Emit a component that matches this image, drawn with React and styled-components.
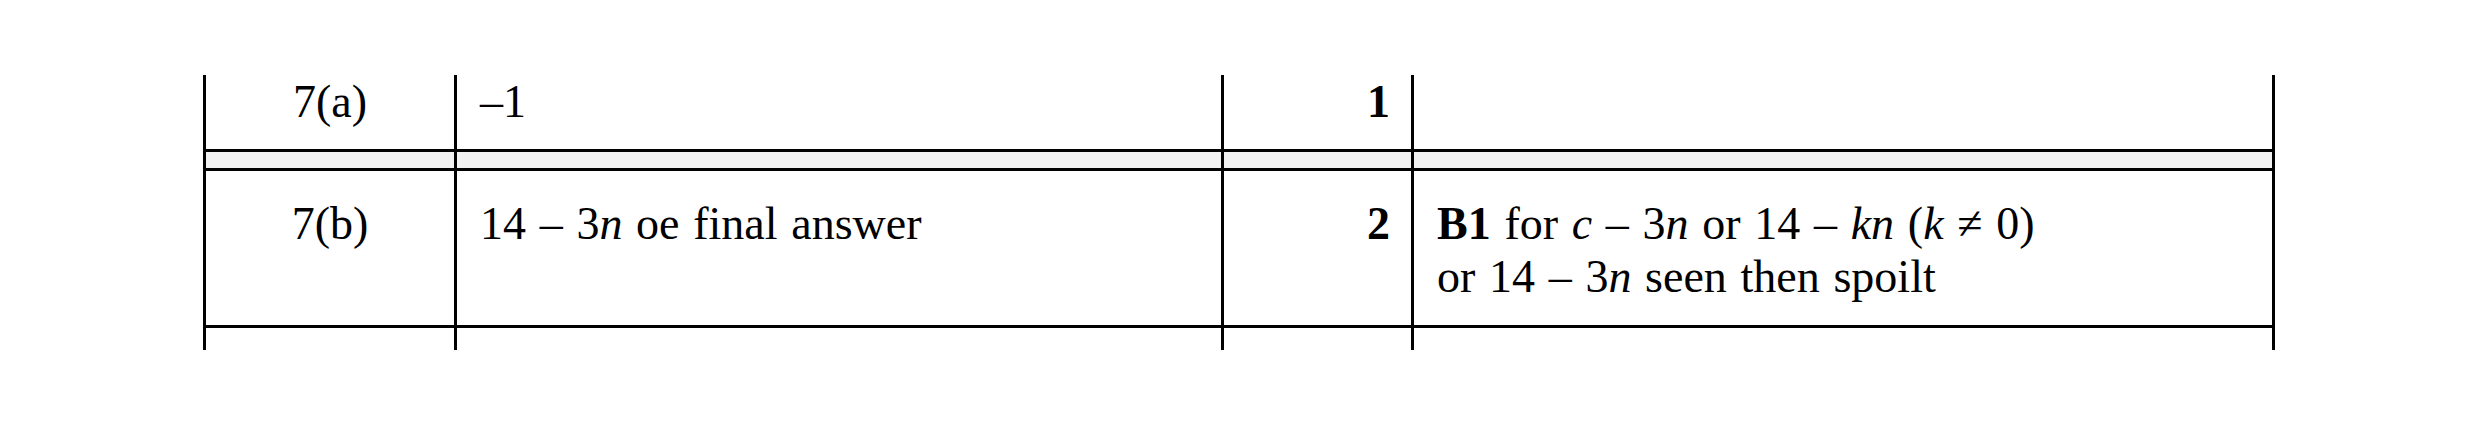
import React from "react";
import styled, { createGlobalStyle } from "styled-components";

const Global = createGlobalStyle`
  html, body { margin: 0; padding: 0; background: #fff; }
  body { font-family: "Liberation Serif", "Times New Roman", serif; color: #000; }
`;

const Page = styled.div`
  width: 2480px;
  height: 426px;
  padding: 75px 0 0 203px;
  box-sizing: border-box;
`;

const Table = styled.div`
  width: 2072px;
  display: flex;
  flex-direction: column;
`;

const Row = styled.div`
  display: grid;
  grid-template-columns: 251px 767px 190px 861px;
  border-right: 3px solid #000;
  border-bottom: ${(p) => (p.$last ? "none" : "3px solid #000")};
  height: ${(p) => p.$h}px;
  box-sizing: content-box;
  background: ${(p) => (p.$band ? "#f1f1f1" : "#fff")};
`;

const Cell = styled.div`
  border-left: 3px solid #000;
  box-sizing: border-box;
  padding: ${(p) => p.$pt || 0}px 23px 0 23px;
  font-size: 46px;
  line-height: 53px;
  word-spacing: 2.2px;
  text-align: ${(p) => p.$align || "left"};
  font-weight: ${(p) => (p.$bold ? 700 : 400)};
  padding-right: ${(p) => (p.$align === "right" ? "21px" : "23px")};
`;

const B = styled.b`
  font-weight: 700;
`;

const I = styled.i`
  font-style: italic;
`;

export default function App() {
  return (
    <>
      <Global />
      <Page>
        <Table>
          <Row $h={74}>
            <Cell $align="center">7(a)</Cell>
            <Cell>–1</Cell>
            <Cell $align="right" $bold>1</Cell>
            <Cell />
          </Row>
          <Row $h={16} $band>
            <Cell />
            <Cell />
            <Cell />
            <Cell />
          </Row>
          <Row $h={154}>
            <Cell $align="center" $pt={26}>7(b)</Cell>
            <Cell $pt={26}>
              14 – 3<I>n</I> oe final answer
            </Cell>
            <Cell $align="right" $bold $pt={26}>2</Cell>
            <Cell $pt={26}>
              <B>B1</B> for <I>c</I> – 3<I>n</I> or 14 – <I>kn</I> (<I>k</I> ≠ 0)
              <br />
              or 14 – 3<I>n</I> seen then spoilt
            </Cell>
          </Row>
          <Row $h={22} $last>
            <Cell />
            <Cell />
            <Cell />
            <Cell />
          </Row>
        </Table>
      </Page>
    </>
  );
}
